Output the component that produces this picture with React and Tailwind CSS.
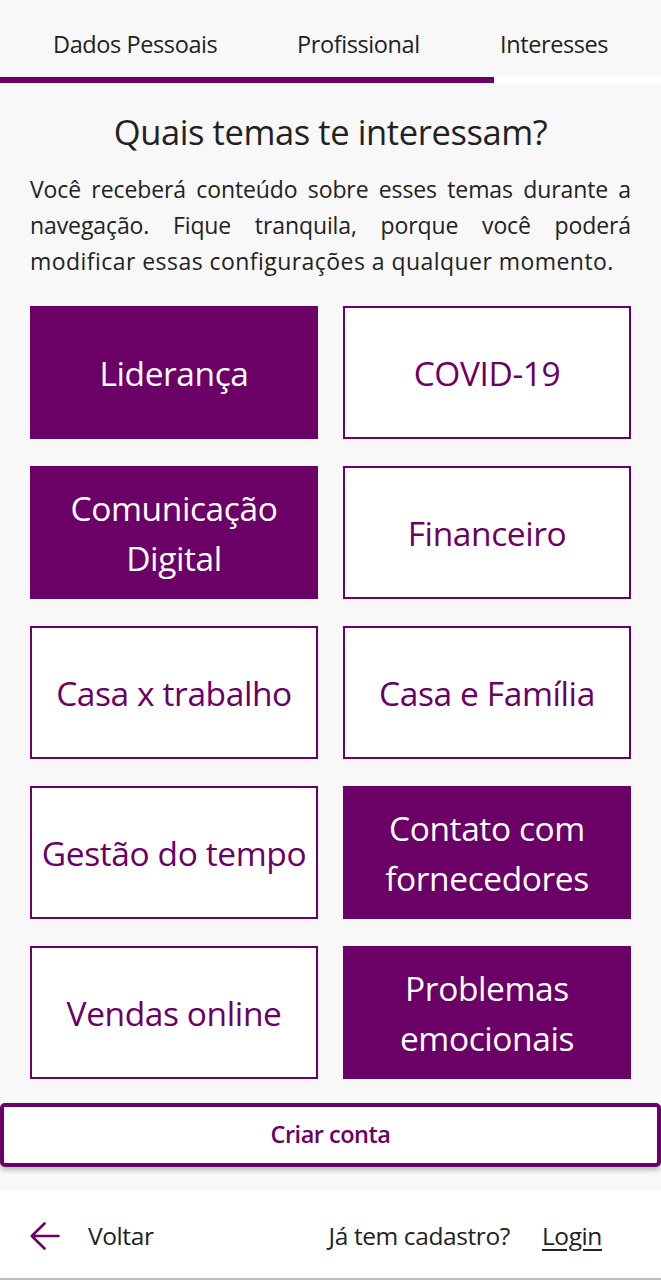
const topics = [
  { label: "Liderança", on: true },
  { label: "COVID-19", on: false },
  { label: "Comunicação Digital", on: true },
  { label: "Financeiro", on: false },
  { label: "Casa x trabalho", on: false },
  { label: "Casa e Família", on: false },
  { label: "Gestão do tempo", on: false },
  { label: "Contato com fornecedores", on: true },
  { label: "Vendas online", on: false },
  { label: "Problemas emocionais", on: true },
];

export default function App() {
  return (
    <div
      className="w-[661px] h-[1280px] bg-[#f8f8f8] flex flex-col text-[#222]"
      style={{ fontFamily: '"Open Sans", "Noto Sans", sans-serif' }}
    >
      {/* Tabs */}
      <div className="flex items-center pt-[13px] h-[77px] text-[23.5px] tracking-[-0.4px]">
        <div className="w-[297px] pl-[53px]">Dados Pessoais</div>
        <div className="w-[203px]">Profissional</div>
        <div>Interesses</div>
      </div>
      <div className="flex h-[6px]">
        <div className="w-[494px] bg-[#6b0066]" />
        <div className="flex-1 bg-white" />
      </div>

      {/* Intro */}
      <h1 className="mt-[27px] text-center text-[34.5px] leading-[44px] tracking-[-0.4px]">
        Quais temas te interessam?
      </h1>
      <p className="mt-[17px] px-[30px] text-[23px] leading-[36px] tracking-[-0.1px]">
        <span className="block text-justify [text-align-last:justify]">
          Você receberá conteúdo sobre esses temas durante a
        </span>
        <span className="block text-justify [text-align-last:justify]">
          navegação. Fique tranquila, porque você poderá
        </span>
        <span className="block tracking-[0.45px]">
          modificar essas configurações a qualquer momento.
        </span>
      </p>

      {/* Topics */}
      <div className="mt-[27px] px-[30px] grid grid-cols-2 gap-x-[25px] gap-y-[27px]">
        {topics.map((t) => (
          <button
            key={t.label}
            className={
              "h-[133px] border-2 border-[#6b0066] flex items-center justify-center text-center text-[33.5px] leading-[50px] tracking-[-0.4px] " +
              (t.on ? "bg-[#6b0066] text-white px-4" : "bg-white text-[#6b0066] px-0")
            }
          >
            {t.label}
          </button>
        ))}
      </div>

      {/* Criar conta */}
      <div className="mt-[24px]">
        <button className="w-[661px] h-[64px] bg-white border-4 border-[#6b0066] rounded-[5px] shadow-[0_3px_5px_rgba(0,0,0,0.25)] text-[23.5px] font-semibold text-[#6b0066] tracking-[-0.5px]">
          Criar conta
        </button>
      </div>

      {/* Footer */}
      <div className="mt-auto h-[90px] bg-white border-b-2 border-[#bdbdbd] flex items-center pt-[4px] px-[30px] text-[24.5px] tracking-[-0.4px]">
        <svg width="30" height="28" viewBox="0 0 30 28" fill="none" stroke="#6b0066" strokeWidth="2.6" strokeLinecap="round" strokeLinejoin="round">
          <path d="M28.5 14H1.8M14.5 1.5L1.8 14l12.7 12.5" />
        </svg>
        <span className="ml-[28px]">Voltar</span>
        <span className="ml-auto">Já tem cadastro?</span>
        <span className="ml-[32px] mr-[29px] underline underline-offset-4">Login</span>
      </div>
    </div>
  );
}
